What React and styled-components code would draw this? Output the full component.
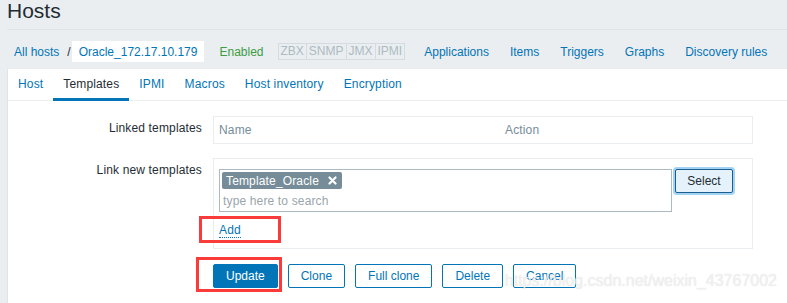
import React from 'react';
import styled, { createGlobalStyle } from 'styled-components';

const GlobalStyle = createGlobalStyle`
	body {
		margin: 0;
		background: #ebeef0;
		font-family: 'Liberation Sans', Arial, sans-serif;
		font-size: 12px;
		letter-spacing: 0.15px;
		color: #1f2c33;
	}
	* {
		box-sizing: border-box;
	}
`;

const Page = styled.div`
	position: relative;
	height: 303px;
	overflow: hidden;
`;

const Header = styled.header`
	margin-left: 7px;
	height: 30px;
	border-bottom: 1px solid #dfe4e7;
`;

const Title = styled.h1`
	margin: 0;
	font-size: 21px;
	line-height: 21px;
	font-weight: normal;
	letter-spacing: 0;
	color: #1f2c33;
`;

const Nav = styled.nav`
	display: flex;
	align-items: center;
	height: 21px;
	margin: 11px 0 7px 7px;
	padding-left: 7px;
	white-space: nowrap;
	letter-spacing: 0;
`;

const Link = styled.a`
	color: #0275b8;
	text-decoration: none;
`;

const Slash = styled.span`
	margin: 0 1px 0 8px;
	color: #1f2c33;
`;

const HostBox = styled.span`
	display: flex;
	align-items: center;
	height: 21px;
	padding: 0 7px;
	background: #fff;
	color: #0275b8;
`;

const Enabled = styled.span`
	margin-left: 15px;
	color: #3b9c46;
`;

const Statuses = styled.span`
	display: flex;
	margin: 0 19px 0 14px;
`;

const Status = styled.span`
	height: 17px;
	line-height: 15px;
	padding: 0 2px;
	border: 1px solid #d5dce0;
	margin-left: -1px;
	color: #acbbc2;
	&:first-child {
		margin-left: 0;
	}
`;

const NavLinks = styled.span`
	display: flex;
	gap: 21px;
`;

const Panel = styled.main`
	margin-left: 7px;
	background: #fff;
	border-left: 1px solid #dfe4e7;
	padding-bottom: 40px;
`;

const TabList = styled.ul`
	display: flex;
	margin: 0;
	padding: 0;
	list-style: none;
	border-bottom: 1px solid #ebeef0;
	height: 32px;
`;

const Tab = styled.li`
	padding: 1px 10px 0;
	line-height: 28px;
	height: 32px;
	border-bottom: 3px solid ${(p) => (p.active ? '#0275b8' : 'transparent')};
	color: ${(p) => (p.active ? '#1f2c33' : '#0275b8')};
	cursor: pointer;
`;

const Form = styled.div`
	padding-top: 15px;
	display: grid;
	grid-template-columns: 194px 540px;
	column-gap: 11px;
	row-gap: 14px;
	align-items: start;
`;

const Label = styled.label`
	text-align: right;
	padding-top: 5px;
	line-height: 14px;
	white-space: nowrap;
`;

const Table = styled.div`
	display: grid;
	grid-template-columns: 286px 1fr;
	border: 1px solid #ebeef0;
	height: 28px;
`;

const Th = styled.div`
	padding: 0 5px;
	line-height: 26px;
	color: #768d99;
`;

const FieldBox = styled.div`
	border: 1px solid #ebeef0;
	padding: 10px 5px;
`;

const SelectRow = styled.div`
	display: flex;
	align-items: flex-start;
	gap: 3px;
`;

const Multi = styled.div`
	width: 453px;
	height: 43px;
	border: 1px solid #acbbc2;
	padding: 2px;
	display: flex;
	flex-direction: column;
`;

const Chip = styled.span`
	align-self: flex-start;
	display: flex;
	align-items: center;
	height: 17px;
	padding: 0 5px 0 4px;
	background: #768d99;
	color: #fff;
	border-radius: 2px;
	gap: 9px;
`;

const Placeholder = styled.span`
	margin: 4px 0 0 1px;
	line-height: 16px;
	color: #9aa5ab;
`;

const SelectBtn = styled.button`
	width: 58px;
	height: 24px;
	font: inherit;
	color: #1f2c33;
	background: #e5f2fc;
	border: 1px solid #1a5f8e;
	border-radius: 2px;
	box-shadow: 0 0 0 2px #a3d3f3;
	padding: 0;
`;

const AddWrap = styled.div`
	margin-top: 11px;
	display: flex;
`;

const AddLink = styled.a`
	position: relative;
	line-height: 14px;
	color: #0275b8;
	text-decoration: none;
	border-bottom: 1px dotted #0275b8;
`;

const Mark = styled.span`
	position: absolute;
	left: ${(p) => p.left}px;
	top: ${(p) => p.top}px;
	width: ${(p) => p.w}px;
	height: ${(p) => p.h}px;
	border: 3px solid #fb3a3a;
	pointer-events: none;
`;

const Buttons = styled.div`
	grid-column: 2;
	display: flex;
	gap: 10px;
	margin-top: 1px;
`;

const BtnWrap = styled.span`
	position: relative;
	display: flex;
`;

const Button = styled.button`
	height: 24px;
	padding: 0 12px;
	font: inherit;
	letter-spacing: 0;
	border: 1px solid #0275b8;
	border-radius: 2px;
	background: ${(p) => (p.primary ? '#0275b8' : '#fff')};
	color: ${(p) => (p.primary ? '#fff' : '#0275b8')};
`;

const Watermark = styled.div`
	position: absolute;
	right: 10px;
	top: 272px;
	font-size: 16px;
	line-height: 18px;
	letter-spacing: 0;
	color: rgba(242, 242, 242, 0.9);
	text-shadow: 0 0 1px rgba(150, 150, 150, 0.3);
	pointer-events: none;
	white-space: nowrap;
`;

const Cross = () => (
	<svg width='9' height='9' viewBox='0 0 9 9'>
		<path d='M1.5 1.5 L7.5 7.5 M7.5 1.5 L1.5 7.5' stroke='#fff' strokeWidth='2.2' strokeLinecap='round' />
	</svg>
);

const tabs = ['Host', 'Templates', 'IPMI', 'Macros', 'Host inventory', 'Encryption'];
const links = ['Applications', 'Items', 'Triggers', 'Graphs', 'Discovery rules'];

const App = () => {
	return (
		<Page>
			<GlobalStyle />
			<Header>
				<Title>Hosts</Title>
			</Header>
			<Nav>
				<Link>All hosts</Link>
				<Slash>/</Slash>
				<HostBox>Oracle_172.17.10.179</HostBox>
				<Enabled>Enabled</Enabled>
				<Statuses>
					{['ZBX', 'SNMP', 'JMX', 'IPMI'].map((s) => (
						<Status key={s}>{s}</Status>
					))}
				</Statuses>
				<NavLinks>
					{links.map((l) => (
						<Link key={l}>{l}</Link>
					))}
				</NavLinks>
			</Nav>
			<Panel>
				<TabList>
					{tabs.map((t) => (
						<Tab key={t} active={t === 'Templates'}>
							{t}
						</Tab>
					))}
				</TabList>
				<Form>
					<Label>Linked templates</Label>
					<Table>
						<Th>Name</Th>
						<Th>Action</Th>
					</Table>
					<Label>Link new templates</Label>
					<FieldBox>
						<SelectRow>
							<Multi>
								<Chip>
									Template_Oracle
									<Cross />
								</Chip>
								<Placeholder>type here to search</Placeholder>
							</Multi>
							<SelectBtn>Select</SelectBtn>
						</SelectRow>
						<AddWrap>
							<AddLink>
								Add
								<Mark left={-20} top={-7} w={82} h={27} />
							</AddLink>
						</AddWrap>
					</FieldBox>
					<Buttons>
						<BtnWrap>
							<Button primary>Update</Button>
							<Mark left={-17} top={-7} w={86} h={35} />
						</BtnWrap>
						<Button>Clone</Button>
						<Button>Full clone</Button>
						<Button>Delete</Button>
						<Button>Cancel</Button>
					</Buttons>
				</Form>
			</Panel>
			<Watermark>https://blog.csdn.net/weixin_43767002</Watermark>
		</Page>
	);
};

export default App;
